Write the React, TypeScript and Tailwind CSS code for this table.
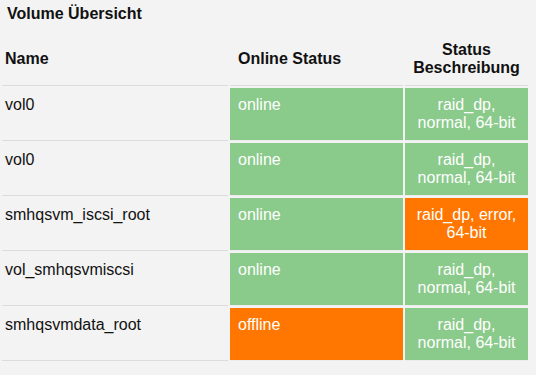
import React from "react";

type Vol = {
  name: string;
  online: boolean;
  desc: string;
  descOk: boolean;
};

const volumes: Vol[] = [
  { name: "vol0", online: true, desc: "raid_dp, normal, 64-bit", descOk: true },
  { name: "vol0", online: true, desc: "raid_dp, normal, 64-bit", descOk: true },
  { name: "smhqsvm_iscsi_root", online: true, desc: "raid_dp, error, 64-bit", descOk: false },
  { name: "vol_smhqsvmiscsi", online: true, desc: "raid_dp, normal, 64-bit", descOk: true },
  { name: "smhqsvmdata_root", online: false, desc: "raid_dp, normal, 64-bit", descOk: true },
];

export default function App() {
  return (
    <div className="w-[536px] h-[375px] bg-[#f3f3f3] text-[#111] font-['Liberation_Sans',Arial,sans-serif] text-[16px] leading-[18px] overflow-hidden">
      <div className="h-[31px] pt-[5px] pl-[7px] font-bold">Volume Übersicht</div>
      <table className="w-[530px] table-fixed border-separate border-spacing-[2px]">
        <thead>
          <tr>
            <th className="w-[226px] h-[53px] pl-[3px] text-left align-middle font-bold border-b border-[#dcdcdc]">
              Name
            </th>
            <th className="w-[173px] h-[53px] pl-[8px] text-left align-middle font-bold border-b border-[#dcdcdc]">
              Online Status
            </th>
            <th className="w-[123px] h-[53px] px-[4px] text-center align-middle font-bold border-b border-[#dcdcdc]">
              Status Beschreibung
            </th>
          </tr>
        </thead>
        <tbody>
          {volumes.map((v, i) => (
            <tr key={i}>
              <td className="h-[53px] pl-[3px] pt-[8px] pb-[8px] align-top border-b border-[#dcdcdc]">
                {v.name}
              </td>
              <td
                className={`h-[53px] pl-[8px] pt-[8px] pb-[8px] align-top text-white border-b border-[#ececec] ${
                  v.online ? "bg-[#8aca8b]" : "bg-[#ff7700]"
                }`}
              >
                {v.online ? "online" : "offline"}
              </td>
              <td
                className={`h-[53px] px-[4px] pt-[8px] pb-[8px] align-top text-center text-white border-b border-[#ececec] ${
                  v.descOk ? "bg-[#8aca8b]" : "bg-[#ff7700]"
                }`}
              >
                {v.desc}
              </td>
            </tr>
          ))}
        </tbody>
      </table>
    </div>
  );
}
